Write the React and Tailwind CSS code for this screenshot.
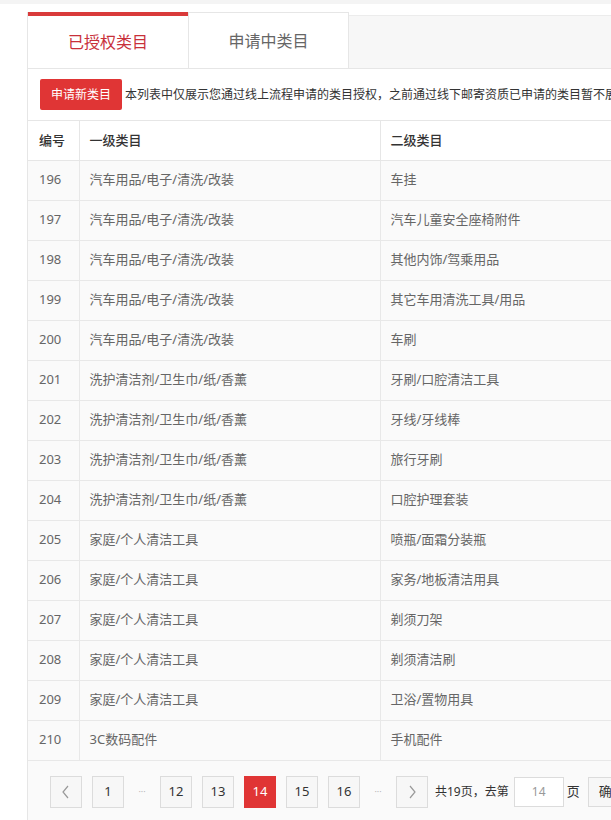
import React from "react";

// rows shown on page 14
const rows = [
  [196, "汽车用品/电子/清洗/改装", "车挂"],
  [197, "汽车用品/电子/清洗/改装", "汽车儿童安全座椅附件"],
  [198, "汽车用品/电子/清洗/改装", "其他内饰/驾乘用品"],
  [199, "汽车用品/电子/清洗/改装", "其它车用清洗工具/用品"],
  [200, "汽车用品/电子/清洗/改装", "车刷"],
  [201, "洗护清洁剂/卫生巾/纸/香薰", "牙刷/口腔清洁工具"],
  [202, "洗护清洁剂/卫生巾/纸/香薰", "牙线/牙线棒"],
  [203, "洗护清洁剂/卫生巾/纸/香薰", "旅行牙刷"],
  [204, "洗护清洁剂/卫生巾/纸/香薰", "口腔护理套装"],
  [205, "家庭/个人清洁工具", "喷瓶/面霜分装瓶"],
  [206, "家庭/个人清洁工具", "家务/地板清洁用具"],
  [207, "家庭/个人清洁工具", "剃须刀架"],
  [208, "家庭/个人清洁工具", "剃须清洁刷"],
  [209, "家庭/个人清洁工具", "卫浴/置物用具"],
  [210, "3C数码配件", "手机配件"],
];

const font = { fontFamily: '"Noto Sans", "Noto Sans CJK SC", sans-serif' };

function PageBtn({ children, active }) {
  return (
    <div
      className={`w-[32px] h-[32px] flex items-center justify-center text-[13px] border ${
        active ? "bg-[#e03535] border-[#e03535] text-white" : "bg-[#f7f7f7] border-[#dcdcdc] text-[#333]"
      }`}
    >
      {children}
    </div>
  );
}

function Dots() {
  return <div className="w-[16px] h-[32px] flex items-center justify-center text-[9px] text-[#bbb]">···</div>;
}

export default function App() {
  return (
    <div className="w-[611px] h-[820px] overflow-hidden bg-white" style={font}>
      <div className="h-[4px] bg-[#f4f4f4]" />
      <div className="pl-[27px] pt-[8px]">
        <div className="w-[1000px] border-l border-[#e6e6e6]">
          {/* tabs */}
          <div className="flex h-[57px] border-b border-[#e6e6e6]">
            <div className="w-[160px] border-t-4 border-[#d93a3a] flex items-center justify-center text-[16px] text-[#c8303a] bg-white">
              已授权类目
            </div>
            <div className="w-[161px] border-t border-l border-r border-[#e6e6e6] flex items-center justify-center text-[16px] text-[#666] bg-white">
              申请中类目
            </div>
            <div className="flex-1 mt-[3px] border-t border-[#ececec] bg-[#f7f7f7]" />
          </div>

          {/* toolbar */}
          <div className="flex items-center h-[52px] pl-[12px] border-b border-[#e6e6e6] bg-white">
            <button className="h-[31px] px-[11px] rounded-[2px] bg-[#e03535] text-white text-[12px]">申请新类目</button>
            <span className="ml-[3px] text-[12px] text-[#333] whitespace-nowrap">
              本列表中仅展示您通过线上流程申请的类目授权，之前通过线下邮寄资质已申请的类目暂不展示
            </span>
          </div>

          {/* table */}
          <table className="w-full border-collapse text-[13px]">
            <thead>
              <tr className="h-[39px] bg-white text-[#333] border-b border-[#e6e6e6]">
                <th className="w-[51px] pl-[11px] text-left font-medium border-r border-[#e6e6e6]">编号</th>
                <th className="w-[301px] pl-[10px] text-left font-medium border-r border-[#e6e6e6]">一级类目</th>
                <th className="pl-[10px] text-left font-medium">二级类目</th>
              </tr>
            </thead>
            <tbody>
              {rows.map(([id, a, b]) => (
                <tr key={id} className="h-[40px] bg-[#fafafa] text-[#666] border-b border-[#e8e8e8]">
                  <td className="pl-[11px] border-r border-[#e8e8e8]">{id}</td>
                  <td className="pl-[10px] border-r border-[#e8e8e8]">{a}</td>
                  <td className="pl-[10px]">{b}</td>
                </tr>
              ))}
            </tbody>
          </table>

          {/* pagination */}
          <div className="flex items-start gap-[10px] pl-[22px] pt-[15px] h-[70px] bg-[#fafafa] text-[#333]">
            <PageBtn>
              <svg width="10" height="14" viewBox="0 0 10 14" fill="none" stroke="#999" strokeWidth="1.2">
                <path d="M7 1L2 7l5 6" />
              </svg>
            </PageBtn>
            <PageBtn>1</PageBtn>
            <Dots />
            <PageBtn>12</PageBtn>
            <PageBtn>13</PageBtn>
            <PageBtn active>14</PageBtn>
            <PageBtn>15</PageBtn>
            <PageBtn>16</PageBtn>
            <Dots />
            <PageBtn>
              <svg width="10" height="14" viewBox="0 0 10 14" fill="none" stroke="#999" strokeWidth="1.2">
                <path d="M3 1l5 6-5 6" />
              </svg>
            </PageBtn>
            <div className="flex items-center h-[32px] text-[12px] -ml-[3px] whitespace-nowrap">
              <span>共19页，去第</span>
              <div className="ml-[5px] w-[50px] h-[30px] border border-[#dcdcdc] bg-white flex items-center justify-center text-[12px] text-[#999]">
                14
              </div>
              <span className="ml-[3px] text-[13px]">页</span>
              <div className="ml-[8px] h-[30px] px-[10px] border border-[#dcdcdc] bg-[#f7f7f7] flex items-center text-[13px]">
                确定
              </div>
            </div>
          </div>
        </div>
      </div>
    </div>
  );
}
